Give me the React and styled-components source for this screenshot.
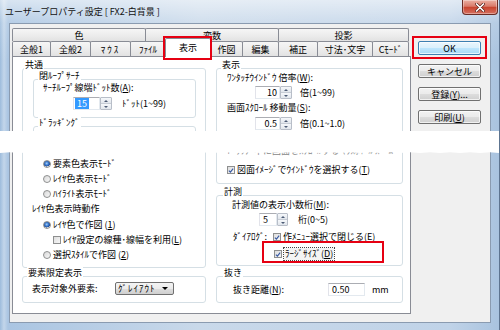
import React from "react";
import styled, { createGlobalStyle } from "styled-components";

const GlobalStyle = createGlobalStyle`
  html, body { margin: 0; padding: 0; background: #fff; }
  body {
    font-family: "Noto Sans CJK JP", "Noto Sans", sans-serif;
    font-size: 9px;
    color: #000;
  }
  * { box-sizing: border-box; }
  u { text-underline-offset: 1px; }
`;

// ragged edges of the torn-out strip
const tearClip = (() => {
  const top = [];
  const bottom = [];
  for (let x = 0; x <= 500; x += 10) {
    top.push(`${x}px ${((x * 7) % 5) * 0.3}px`);
    bottom.unshift(`${x}px calc(100% - ${((x * 11) % 4) * 0.4}px)`);
  }
  return `polygon(${[...top, ...bottom].join(",")})`;
})();

const Window = styled.div`
  position: relative;
  width: 500px;
  height: 330px;
  display: flex;
  flex-direction: column;
  background:
    linear-gradient(180deg, rgba(255,255,255,0.55) 0px, rgba(255,255,255,0.15) 23px, rgba(255,255,255,0) 60px),
    linear-gradient(90deg, #9dbcdc 0px, #c3d6ea 4px, #aac5e2 8px, #c9d9ea 40%, #c0d3e8 90%, #a9c3df 100%);
  border-right: 1px solid #5d7490;
  overflow: hidden;
`;

const TitleBar = styled.div`
  height: 23px;
  flex: none;
  display: flex;
  align-items: flex-start;
  justify-content: space-between;
`;

const Title = styled.div`
  padding: 6px 0 0 5px;
  line-height: 12px;
  white-space: nowrap;
  color: #111;
`;

const CloseBtn = styled.div`
  width: 36px;
  height: 15px;
  margin-right: 1px;
  border: 1px solid #6a2c25;
  border-top: none;
  border-radius: 0 0 4px 4px;
  background: linear-gradient(180deg, #eab0a3 0%, #d97a6a 45%, #c8442f 52%, #d5705f 100%);
  box-shadow: inset 0 0 0 1px rgba(255, 255, 255, 0.35);
  display: flex;
  align-items: center;
  justify-content: center;
`;

const Body = styled.div`
  flex: 1;
  margin: 0 8px 7px 9px;
  background: #f0f0f0;
  border: 1px solid #8a9bb0;
  display: flex;
  padding: 4px 0 0 2px;
`;

const TabArea = styled.div`
  width: 399px;
  display: flex;
  flex-direction: column;
`;

const TabRow = styled.div`
  display: flex;
  height: ${(p) => p.$h}px;
`;

const Tab = styled.div`
  position: relative;
  width: ${(p) => p.$w}px;
  height: ${(p) => (p.$active ? 19 : p.$h)}px;
  margin-top: ${(p) => (p.$active ? -3 : 0)}px;
  z-index: ${(p) => (p.$active ? 2 : 1)};
  border: 1px solid #898c95;
  border-bottom: none;
  border-radius: 2px 2px 0 0;
  background: ${(p) => (p.$active ? "#fff" : "linear-gradient(180deg, #f6f6f6 0%, #ececec 55%, #e2e2e2 100%)")};
  display: flex;
  align-items: center;
  justify-content: center;
  line-height: 11px;
  white-space: nowrap;
  letter-spacing: ${(p) => p.$ls || 0}px;
  padding-bottom: ${(p) => (p.$active ? 2 : 0)}px;
  & + & { margin-left: -1px; }
`;

const Panel = styled.div`
  height: 258px;
  background: #fff;
  border: 1px solid #898c95;
  display: grid;
  grid-template-columns: 184px 187px;
  column-gap: 10px;
  align-items: start;
  padding: 11px 0 0 9px;
`;

const Column = styled.div`
  display: flex;
  flex-direction: column;
`;

const Group = styled.div`
  position: relative;
  height: ${(p) => p.$h}px;
  margin-top: ${(p) => p.$mt || 0}px;
  border: 1px solid #d5dfe5;
  border-radius: 3px;
  padding-left: ${(p) => p.$pl ?? 9}px;
  padding-right: 9px;
  display: flex;
  flex-direction: column;
`;

const GroupLabel = styled.span`
  position: absolute;
  top: -10px;
  left: ${(p) => p.$l ?? 4}px;
  padding: 0 1px;
  background: #fff;
  line-height: 12px;
  white-space: nowrap;
`;

const Row = styled.div`
  position: relative;
  display: flex;
  align-items: center;
  height: ${(p) => p.$h || 12}px;
  margin-top: ${(p) => p.$mt || 0}px;
  margin-left: ${(p) => p.$ml || 0}px;
  line-height: 12px;
  white-space: nowrap;
  color: ${(p) => (p.$faint ? "#888" : "#000")};
`;

const FieldLabel = styled.span`
  width: ${(p) => p.$w}px;
  flex: none;
`;

const Aside = styled.span`
  margin-left: ${(p) => p.$ml}px;
`;

const SpinBox = styled.div`
  display: flex;
  height: 13px;
`;

const Field = styled.div`
  width: ${(p) => p.$w}px;
  height: 100%;
  background: #fff;
  border: 1px solid #e3e9ef;
  border-top-color: #abadb3;
  border-left-color: #e2e3ea;
  display: flex;
  align-items: center;
  justify-content: ${(p) => (p.$left ? "flex-start" : "flex-end")};
  padding: 0 ${(p) => (p.$left ? 3 : 2)}px;
  line-height: 11px;
`;

const Selected = styled.span`
  background: #3399ff;
  color: #fff;
  padding: 0 2px;
  margin-left: -2px;
`;

const SpinBtns = styled.div`
  width: ${(p) => p.$w || 12}px;
  display: flex;
  flex-direction: column;
  border: 1px solid #b8bec8;
  border-radius: 1px;
`;

const SpinBtn = styled.div`
  flex: 1;
  background: linear-gradient(180deg, #f6f8fb 0%, #e1e6ec 100%);
  display: flex;
  align-items: center;
  justify-content: center;
  & + & { border-top: 1px solid #c6ccd5; }
  &::after {
    content: "";
    border-left: 2px solid transparent;
    border-right: 2px solid transparent;
    ${(p) => (p.$down ? "border-top" : "border-bottom")}: 2px solid #4b5a74;
  }
`;

const Check = styled.span`
  width: 8px;
  height: 8px;
  flex: none;
  margin-right: 2px;
  border: 1px solid #8e8f8f;
  background: linear-gradient(135deg, #dedede 0%, #f7f7f7 100%);
  display: flex;
  align-items: center;
  justify-content: center;
`;

const Radio = styled.span`
  width: 8px;
  height: 8px;
  flex: none;
  margin-right: 2px;
  border: 1px solid #8e8f8f;
  border-radius: 50%;
  background: ${(p) =>
    p.$on
      ? "radial-gradient(circle at 45% 40%, #a9d1f7 0%, #3b7bd0 35%, #1d4c9a 62%, #eeeeee 66%, #dcdcdc 100%)"
      : "linear-gradient(135deg, #d8d8d8 0%, #f8f8f8 100%)"};
`;

const Focus = styled.span`
  outline: 1px dotted #444;
  padding: 0 1px;
  background: #f4f4f4;
`;

const RedMark = styled.div`
  position: absolute;
  top: ${(p) => p.$t}px;
  left: ${(p) => p.$l}px;
  width: ${(p) => p.$w}px;
  height: ${(p) => p.$h}px;
  border: 2px solid #e60012;
  pointer-events: none;
  z-index: 3;
`;

const Dropdown = styled.div`
  width: 59px;
  height: 13px;
  border: 1px solid #707070;
  border-radius: 2px;
  background: linear-gradient(180deg, #f4f4f4 0%, #ebebeb 50%, #dddddd 51%, #d0d0d0 100%);
  display: flex;
  align-items: center;
  justify-content: space-between;
  padding: 0 5px 0 2px;
  line-height: 11px;
  letter-spacing: 1px;
  &::after {
    content: "";
    border-left: 3px solid transparent;
    border-right: 3px solid transparent;
    border-top: 3px solid #000;
  }
`;

const ButtonColumn = styled.div`
  display: flex;
  flex-direction: column;
  gap: 9px;
  margin-left: 7px;
  padding-top: 13px;
`;

const Button = styled.div`
  position: relative;
  width: 63px;
  height: 14px;
  border: 1px solid ${(p) => (p.$default ? "#3c7fb1" : "#707070")};
  border-radius: 2px;
  background: ${(p) =>
    p.$default
      ? "linear-gradient(180deg, #eaf6fd 0%, #d9f0fc 50%, #bee6fd 51%, #a7d9f5 100%)"
      : "linear-gradient(180deg, #f2f2f2 0%, #ebebeb 50%, #dddddd 51%, #cfcfcf 100%)"};
  box-shadow: inset 0 0 0 1px rgba(255, 255, 255, 0.7);
  display: flex;
  align-items: center;
  justify-content: center;
  line-height: 11px;
`;

const Tear = styled.div`
  position: absolute;
  left: 0;
  right: 0;
  top: 131px;
  height: 22px;
  background: #fff;
  clip-path: ${tearClip};
  z-index: 10;
`;

const CheckMark = () => (
  <svg width="7" height="7" viewBox="0 0 7 7">
    <path d="M1 3.6 L2.8 5.4 L6 1.2" fill="none" stroke="#3a5ba3" strokeWidth="1.4" />
  </svg>
);

const CheckBox = ({ on }) => <Check>{on && <CheckMark />}</Check>;

const Spinner = ({ w, bw, left, children }) => (
  <SpinBox>
    <Field $w={w} $left={left}>{children}</Field>
    <SpinBtns $w={bw}>
      <SpinBtn />
      <SpinBtn $down />
    </SpinBtns>
  </SpinBox>
);

const topTabs = [
  { label: "色", w: 134 },
  { label: "変数", w: 134 },
  { label: "投影", w: 131 },
];

const bottomTabs = [
  { label: "全般1", w: 39 },
  { label: "全般2", w: 41 },
  { label: "ﾏｳｽ", w: 41, ls: 2 },
  { label: "ﾌｧｲﾙ", w: 36 },
  { label: "表示", w: 46, active: true },
  { label: "作図", w: 33 },
  { label: "編集", w: 37 },
  { label: "補正", w: 40 },
  { label: "寸法･文字", w: 56 },
  { label: "Cﾓｰﾄﾞ", w: 37 },
];

export default function App() {
  return (
    <>
      <GlobalStyle />
      <Window>
        <TitleBar>
          <Title>ユーザープロパティ設定 [ FX2-白背景 ]</Title>
          <CloseBtn>
            <svg width="10" height="9" viewBox="0 0 10 9">
              <path d="M1.5 1 L8.5 8 M8.5 1 L1.5 8" stroke="#5a2019" strokeWidth="3" strokeLinecap="round" />
              <path d="M1.5 1 L8.5 8 M8.5 1 L1.5 8" stroke="#fff" strokeWidth="1.7" strokeLinecap="round" />
            </svg>
          </CloseBtn>
        </TitleBar>

        <Body>
          <TabArea>
            <TabRow $h={13}>
              {topTabs.map((t) => (
                <Tab key={t.label} $w={t.w} $h={13}>{t.label}</Tab>
              ))}
            </TabRow>
            <TabRow $h={15}>
              {bottomTabs.map((t) => (
                <Tab key={t.label} $w={t.w} $h={15} $ls={t.ls} $active={t.active}>
                  {t.label}
                  {t.active && <RedMark $t={-3} $l={-3} $w={49} $h={24} />}
                </Tab>
              ))}
            </TabRow>

            <Panel>
              <Column>
                <Group $h={200} $pl={10}>
                  <GroupLabel $l={1}>共通</GroupLabel>
                  <Group $h={39} $mt={10}>
                    <GroupLabel>閉ﾙｰﾌﾟｻｰﾁ</GroupLabel>
                    <Row $mt={2}>ｻｰﾁﾙｰﾌﾟ線端ﾄﾞｯﾄ数(<u>A</u>):</Row>
                    <Row $mt={3} $h={13} $ml={30}>
                      <Spinner w={27} left><Selected>15</Selected></Spinner>
                      <Aside $ml={10}>ﾄﾞｯﾄ(1~99)</Aside>
                    </Row>
                  </Group>
                  <Group $h={22} $mt={8}>
                    <GroupLabel>ﾄﾞﾗｯｷﾞﾝｸﾞ</GroupLabel>
                  </Group>
                  <Row $mt={8} $h={15} $ml={10}><Radio $on />要素色表示ﾓｰﾄﾞ</Row>
                  <Row $h={15} $ml={10}><Radio />ﾚｲﾔ色表示ﾓｰﾄﾞ</Row>
                  <Row $h={15} $ml={10}><Radio />ﾊｲﾗｲﾄ表示ﾓｰﾄﾞ</Row>
                  <Row $h={16} $ml={-1}>ﾚｲﾔ色表示時動作</Row>
                  <Row $h={15} $ml={10}><Radio $on />ﾚｲﾔ色で作図 (<u>1</u>)</Row>
                  <Row $h={15} $ml={20}><CheckBox />ﾚｲﾔ設定の線種･線幅を利用(<u>L</u>)</Row>
                  <Row $h={15} $ml={10}><Radio />選択ｽﾀｲﾙで作図 (<u>2</u>)</Row>
                </Group>

                <Group $h={27} $mt={8}>
                  <GroupLabel>要素限定表示</GroupLabel>
                  <Row $mt={5} $h={13}>
                    <FieldLabel $w={83}>表示対象外要素:</FieldLabel>
                    <Dropdown>ｸﾞﾚｲｱｳﾄ</Dropdown>
                  </Row>
                </Group>
              </Column>

              <Column>
                <Group $h={116} $pl={10}>
                  <GroupLabel>表示</GroupLabel>
                  <Row $mt={3}>ﾜﾝﾀｯﾁｳｲﾝﾄﾞｳ 倍率(<u>W</u>):</Row>
                  <Row $mt={2} $h={13} $ml={28}>
                    <Spinner w={25}>10</Spinner>
                    <Aside $ml={8}>倍(1~99)</Aside>
                  </Row>
                  <Row $mt={3}>画面ｽｸﾛｰﾙ 移動量(<u>S</u>):</Row>
                  <Row $mt={3} $h={13} $ml={28}>
                    <Spinner w={25}>0.5</Spinner>
                    <Aside $ml={8}>倍(0.1~1.0)</Aside>
                  </Row>
                  <Row $mt={15} $faint>ﾄﾞﾗｯｸﾞ中に画面をｽｸﾛｰﾙする ﾏｳｽﾎｲｰﾙ ｽﾞｰﾑ</Row>
                  <Row $mt={7}><CheckBox on />図面ｲﾒｰｼﾞでｳｲﾝﾄﾞｳを選択する(<u>T</u>)</Row>
                </Group>

                <Group $h={71} $mt={11} $pl={15}>
                  <GroupLabel $l={6}>計測</GroupLabel>
                  <Row $mt={3}>計測値の表示小数桁(<u>M</u>):</Row>
                  <Row $mt={2} $h={13} $ml={27}>
                    <Spinner w={18} bw={11} left>5</Spinner>
                    <Aside $ml={10}>桁(0~5)</Aside>
                  </Row>
                  <Row $mt={5} $ml={1}>
                    <FieldLabel $w={40}>ﾀﾞｲｱﾛｸﾞ:</FieldLabel>
                    <CheckBox on />作ﾒﾆｭｰ選択で閉じる(<u>E</u>)
                  </Row>
                  <Row $mt={5} $ml={42}>
                    <CheckBox on />
                    <Focus>ﾗｰｼﾞｻｲｽﾞ(<u>D</u>)</Focus>
                    <RedMark $t={-7} $l={-12} $w={122} $h={22} />
                  </Row>
                </Group>

                <Group $h={27} $mt={10} $pl={16}>
                  <GroupLabel $l={6}>抜き</GroupLabel>
                  <Row $mt={6} $h={13}>
                    <FieldLabel $w={95}>抜き距離(<u>N</u>):</FieldLabel>
                    <Field $w={37} $left>0.50</Field>
                    <Aside $ml={7}>mm</Aside>
                  </Row>
                </Group>
              </Column>
            </Panel>
          </TabArea>

          <ButtonColumn>
            <Button $default>
              OK
              <RedMark $t={-6} $l={-7} $w={75} $h={23} />
            </Button>
            <Button>キャンセル</Button>
            <Button>登録(<u>Y</u>)...</Button>
            <Button>印刷(<u>U</u>)</Button>
          </ButtonColumn>
        </Body>

        <Tear />
      </Window>
    </>
  );
}
